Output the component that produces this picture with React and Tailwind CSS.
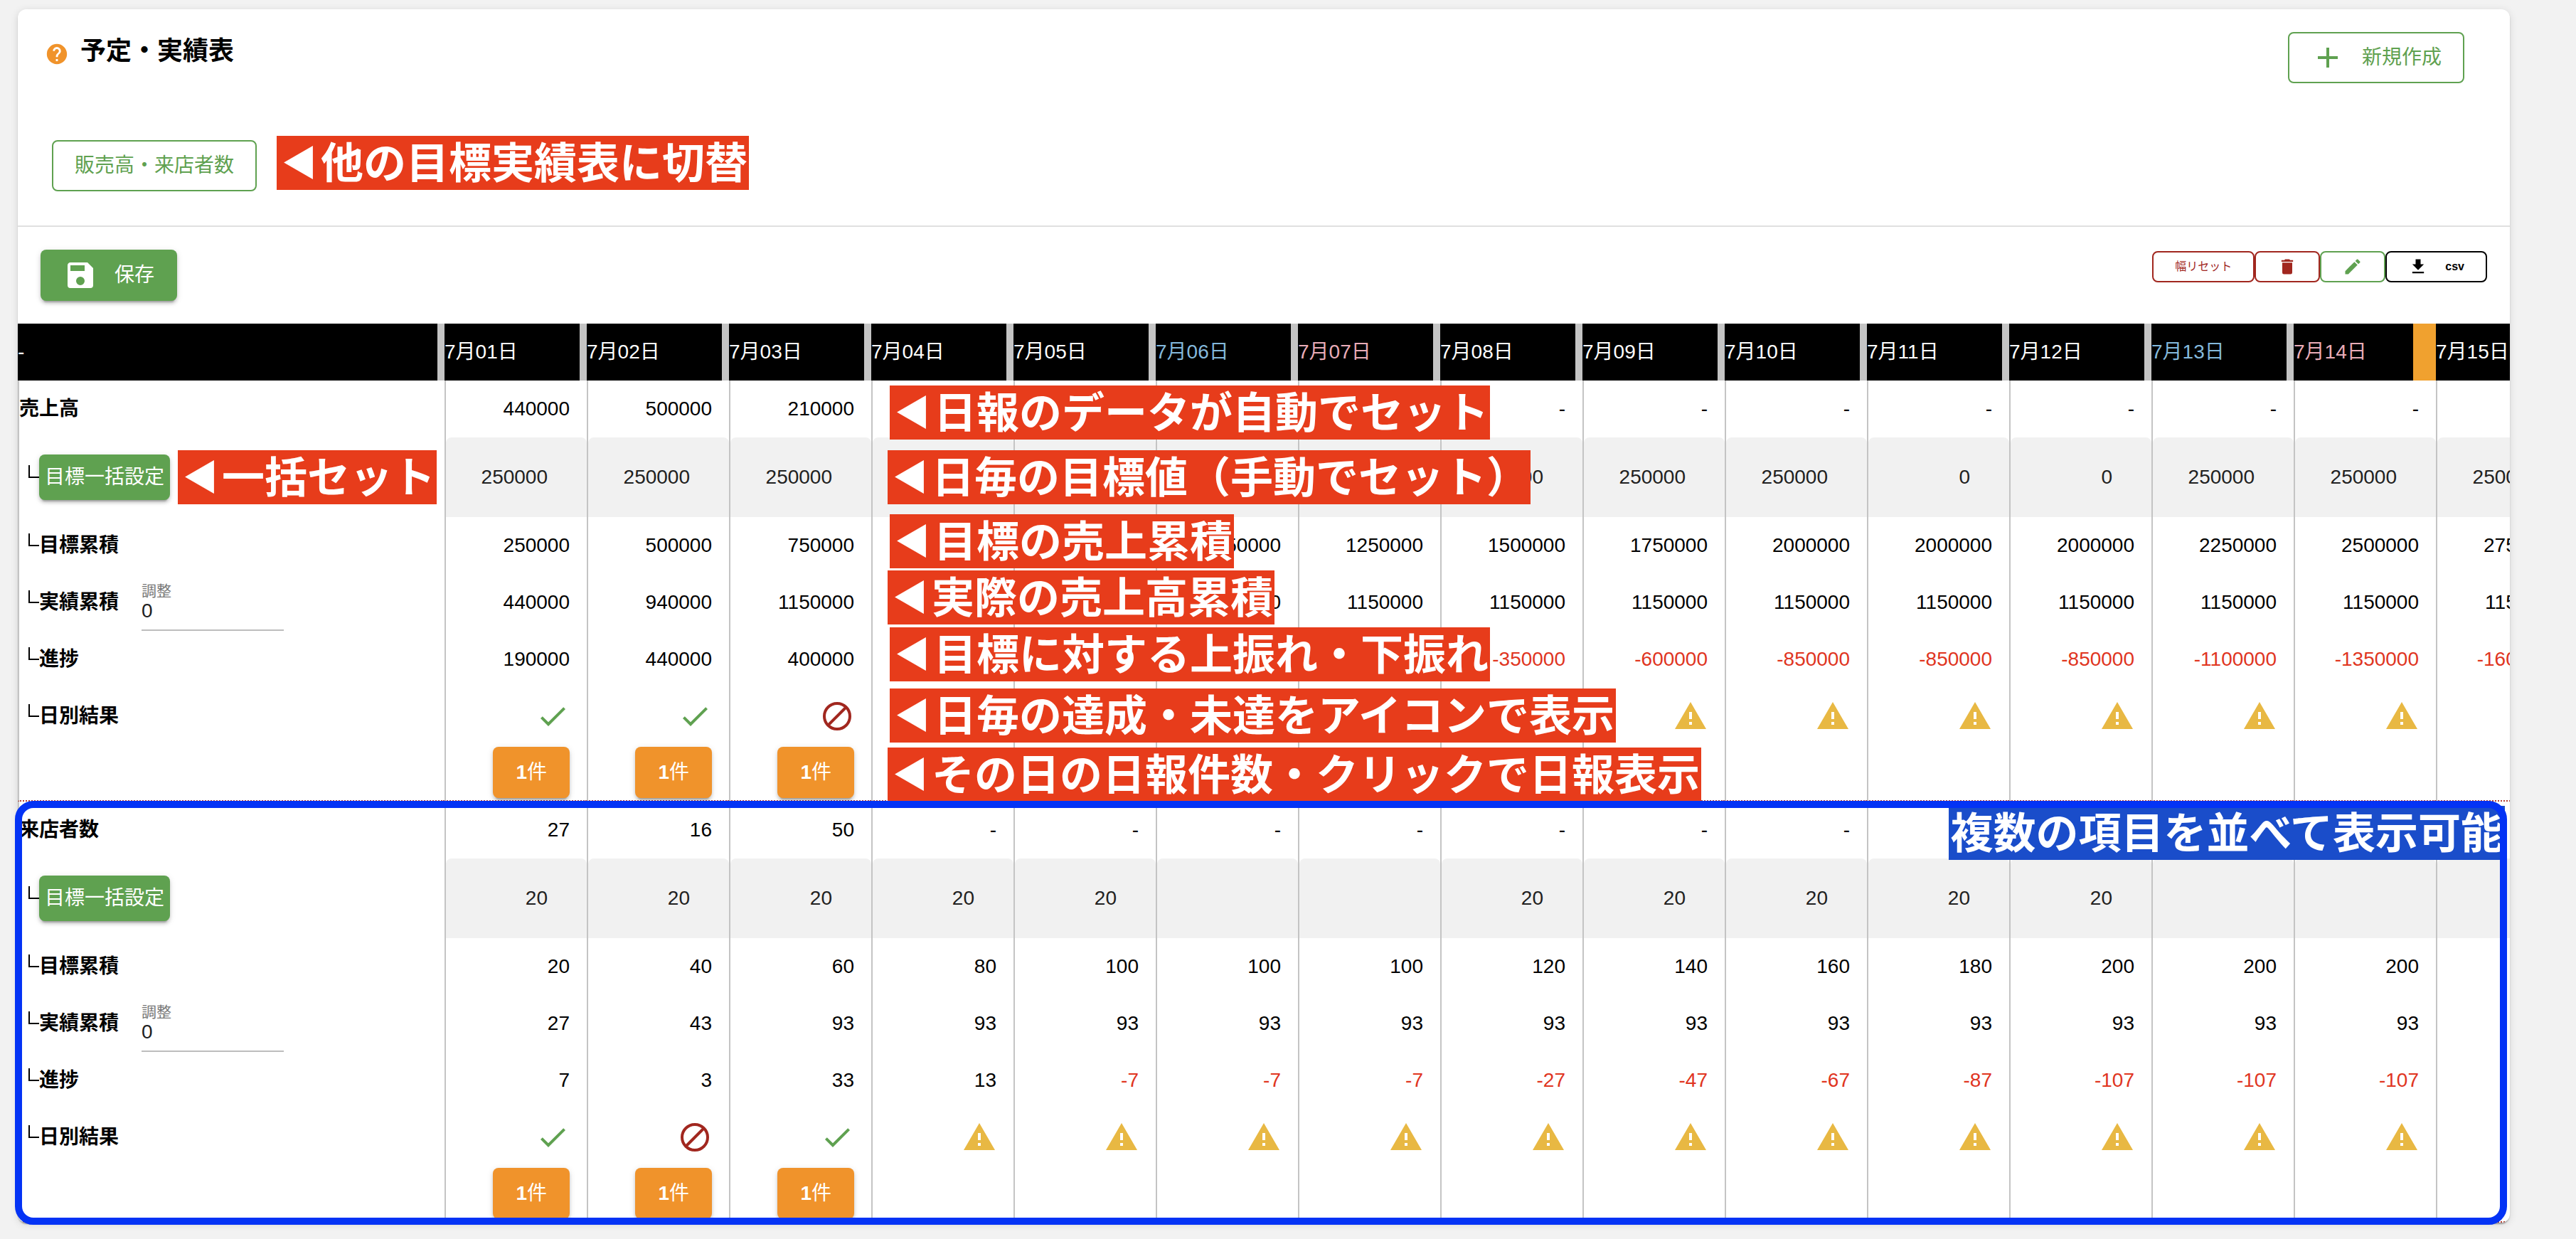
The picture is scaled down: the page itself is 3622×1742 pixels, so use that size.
import React from "react";

const ICONS = {
  help: "M15.07,11.25L14.17,12.17C13.45,12.89 13,13.5 13,15H11V14.5C11,13.39 11.45,12.39 12.17,11.67L13.41,10.41C13.78,10.05 14,9.55 14,9C14,7.89 13.1,7 12,7A2,2 0 0,0 10,9H8A4,4 0 0,1 12,5A4,4 0 0,1 16,9C16,9.88 15.64,10.67 15.07,11.25M13,19H11V17H13M12,2A10,10 0 0,0 2,12A10,10 0 0,0 12,22A10,10 0 0,0 22,12C22,6.47 17.5,2 12,2Z",
  plus: "M19,13H13V19H11V13H5V11H11V5H13V11H19V13Z",
  save: "M15,9H5V5H15M12,19A3,3 0 0,1 9,16A3,3 0 0,1 12,13A3,3 0 0,1 15,16A3,3 0 0,1 12,19M17,3H5C3.89,3 3,3.9 3,5V19A2,2 0 0,0 5,21H19A2,2 0 0,0 21,19V7L17,3Z",
  trash: "M19,4H15.5L14.5,3H9.5L8.5,4H5V6H19M6,19A2,2 0 0,0 8,21H16A2,2 0 0,0 18,19V7H6V19Z",
  pencil: "M20.71,7.04C21.1,6.65 21.1,6 20.71,5.63L18.37,3.29C18,2.9 17.35,2.9 16.96,3.29L15.12,5.12L18.87,8.87M3,17.25V21H6.75L17.81,9.93L14.06,6.18L3,17.25Z",
  download: "M5,20H19V18H5M19,9H15V3H9V9H5L12,16L19,9Z",
  check: "M21,7L9,19L3.5,13.5L4.91,12.09L9,16.17L19.59,5.59L21,7Z",
  alert: "M13,14H11V9H13M13,18H11V16H13M1,21H23L12,2L1,21Z",
};

function Icon({ name, className }) {
  return (
    <svg viewBox="0 0 24 24" fill="currentColor" aria-hidden="true" className={`shrink-0 ${className}`}>
      <path d={ICONS[name]} />
    </svg>
  );
}

const RAISED =
  "rounded-lg text-white shadow-[0_6px_2px_-4px_rgba(0,0,0,0.2),0_4px_4px_rgba(0,0,0,0.14),0_2px_10px_rgba(0,0,0,0.12)]";

function ResultIcon({ kind }) {
  if (kind === "ok") return <Icon name="check" className="size-12 text-[#5fa150]" />;
  if (kind === "ng")
    return (
      <svg viewBox="0 0 24 24" fill="none" stroke="currentColor" strokeWidth="2" aria-hidden="true" className="size-12 shrink-0 text-[#a1271f]">
        <circle cx="12" cy="12" r="9" />
        <path d="M5.64 18.36L18.36 5.64" />
      </svg>
    );
  return <Icon name="alert" className="size-12 text-[#e8b843]" />;
}

const DAYS = Array.from({ length: 15 }, (_, i) => ({
  label: `7月${String(i + 1).padStart(2, "0")}日`,
  color: i % 7 === 5 ? "text-[#84b9dc]" : i % 7 === 6 ? "text-[#e9acb8]" : "text-white",
  edge: i === 13 ? "border-r-[32px] border-[#f0a12f]" : "border-r-[10px] border-[#c4c4c4]",
}));

const dashes = (n) => Array(n).fill("-");

const SECTIONS = [
  {
    id: "sales",
    title: "売上高",
    actual: ["440000", "500000", "210000", ...dashes(12)],
    target: ["250000", "250000", "250000", "250000", "250000", "0", "0", "250000", "250000", "250000", "0", "0", "250000", "250000", "250000"],
    targetSum: [250000, 500000, 750000, 1000000, 1250000, 1250000, 1250000, 1500000, 1750000, 2000000, 2000000, 2000000, 2250000, 2500000, 2750000],
    actualSum: [440000, 940000, ...Array(13).fill(1150000)],
    results: ["ok", "ok", "ng", ...Array(12).fill("alert")],
  },
  {
    id: "visitors",
    title: "来店者数",
    actual: ["27", "16", "50", ...dashes(12)],
    target: ["20", "20", "20", "20", "20", "", "", "20", "20", "20", "20", "20", "", "", "20"],
    targetSum: [20, 40, 60, 80, 100, 100, 100, 120, 140, 160, 180, 200, 200, 200, 220],
    actualSum: [27, 43, ...Array(13).fill(93)],
    results: ["ok", "ng", "ok", ...Array(12).fill("alert")],
  },
];

const CELL = "h-20 border-l-2 border-[#c4c4c4] p-0";

function Branch() {
  return <span className="mb-4 ml-[13px] h-[18px] w-[15px] shrink-0 border-b-2 border-l-2 border-black" aria-hidden="true" />;
}

function RowLabel({ branch, children }) {
  return (
    <th scope="row" className={`${CELL} text-left font-bold`}>
      <div className="flex h-full items-center">
        {branch && <Branch />}
        {children}
      </div>
    </th>
  );
}

function ValueRow({ label, branch, values, extra }) {
  return (
    <tr>
      <RowLabel branch={branch}>
        {label}
        {extra}
      </RowLabel>
      {values.map((v, i) => (
        <td key={i} className={`${CELL} pr-6 text-right ${Number(v) < 0 ? "text-[#e0351f]" : ""}`}>
          {v}
        </td>
      ))}
    </tr>
  );
}

function Section({ s }) {
  const last = "border-b-2 [border-bottom-style:dotted] border-b-[#b23a30]";
  return (
    <tbody>
      <ValueRow label={s.title} values={s.actual} />
      <tr>
        <RowLabel branch>
          <button type="button" className={`${RAISED} h-16 bg-[#5fa150] px-2 font-normal`}>
            目標一括設定
          </button>
        </RowLabel>
        {s.target.map((v, i) => (
          <td key={i} className={CELL}>
            <input
              type="text"
              inputMode="numeric"
              aria-label={`${s.title} 目標 ${DAYS[i].label}`}
              defaultValue={v}
              className="block h-28 w-full rounded-t-lg bg-[#f1f1f1] pr-[55px] text-right text-[#212121] outline-none"
            />
          </td>
        ))}
      </tr>
      <ValueRow branch label="目標累積" values={s.targetSum} />
      <ValueRow
        branch
        label="実績累積"
        values={s.actualSum}
        extra={
          <div className="ml-8 flex h-20 w-[200px] flex-col justify-end font-normal">
            <label htmlFor={`${s.id}-adjust`} className="text-[21px] leading-6 text-[#777777]">
              調整
            </label>
            <input
              id={`${s.id}-adjust`}
              type="text"
              inputMode="numeric"
              defaultValue="0"
              className="h-11 w-full border-b-2 border-[#bdbdbd] pb-2.5 text-[#212121] outline-none"
            />
          </div>
        }
      />
      <ValueRow branch label="進捗" values={s.actualSum.map((v, i) => v - s.targetSum[i])} />
      <tr>
        <RowLabel branch>日別結果</RowLabel>
        {s.results.map((r, i) => (
          <td key={i} className={`${CELL} pr-6`}>
            <div className="flex justify-end">
              <ResultIcon kind={r} />
            </div>
          </td>
        ))}
      </tr>
      <tr>
        <td className={`${CELL} ${last}`} />
        {s.results.map((_, i) => (
          <td key={i} className={`${CELL} ${last} pr-6`}>
            {i < 3 && (
              <button type="button" className={`${RAISED} ml-auto flex h-[72px] items-center bg-[#f0932b] px-8`}>
                <span className="font-bold">1</span>件
              </button>
            )}
          </td>
        ))}
      </tr>
    </tbody>
  );
}

function Callout({ className, arrow, children }) {
  return (
    <div className={`absolute flex h-[76px] px-[2px] font-['Noto_Sans_CJK_JP',sans-serif] text-[60px] leading-[68px] font-bold whitespace-nowrap text-white ${className}`}>
      {arrow && <span className="w-[60px] text-center text-[50px]">◀</span>}
      {children}
    </div>
  );
}

const NOTES = [
  { arrow: true, text: "一括セット", at: "left-[225px] top-[178px] bg-[#e73c1b]" },
  { arrow: true, text: "日報のデータが自動でセット", at: "left-[1226px] top-[87px] bg-[#e73c1b]" },
  { arrow: true, text: "日毎の目標値（手動でセット）", at: "left-[1223px] top-[178px] bg-[#e73c1b]" },
  { arrow: true, text: "目標の売上累積", at: "left-[1226px] top-[268px] bg-[#e73c1b]" },
  { arrow: true, text: "実際の売上高累積", at: "left-[1223px] top-[347px] bg-[#e73c1b]" },
  { arrow: true, text: "目標に対する上振れ・下振れ", at: "left-[1226px] top-[427px] bg-[#e73c1b]" },
  { arrow: true, text: "日毎の達成・未達をアイコンで表示", at: "left-[1226px] top-[513px] bg-[#e73c1b]" },
  { arrow: true, text: "その日の日報件数・クリックで日報表示", at: "left-[1223px] top-[596px] bg-[#e73c1b]" },
  { arrow: false, text: "複数の項目を並べて表示可能", at: "right-[7px] top-[678px] bg-[#1a4dca]" },
];

const OUTLINED = "flex h-[72px] items-center gap-6 rounded-lg border-2 border-[#5fa150] px-[30px] text-[#5fa150]";
const SMALL = "flex h-11 items-center gap-6 rounded-lg border-2 px-[30px] text-base";

export default function App() {
  return (
    <div className="min-h-screen overflow-hidden bg-[#f2f2f2] pt-[13px] pr-[93px] pb-5 pl-[25px] font-['Liberation_Sans','Noto_Sans_CJK_JP',sans-serif] text-[28px] leading-10 text-black">
      <main className="rounded-xl bg-white shadow-[0_4px_2px_-2px_rgba(0,0,0,0.2),0_2px_2px_rgba(0,0,0,0.14),0_2px_12px_rgba(0,0,0,0.12)]">
        <header className="border-b-2 border-[#e0e0e0] pt-8 pr-16 pb-12">
          <div className="flex items-start justify-between pl-[38px]">
            <h1 className="flex items-center gap-4 text-[36px] leading-[54px] font-bold">
              <Icon name="help" className="mt-2 size-[34px] text-[#f0932b]" />
              予定・実績表
            </h1>
            <button type="button" className={OUTLINED}>
              <Icon name="plus" className="size-12" />
              新規作成
            </button>
          </div>
          <div className="mt-20 flex pl-12">
            <div className="relative">
              <button type="button" className={OUTLINED}>
                販売高・来店者数
              </button>
              <Callout arrow className="-top-[6px] left-full ml-7 bg-[#e73c1b]">
                他の目標実績表に切替
              </Callout>
            </div>
          </div>
        </header>

        <div className="flex items-start justify-between p-8">
          <button type="button" className={`${RAISED} flex h-[72px] items-center gap-6 bg-[#5fa150] px-8`}>
            <Icon name="save" className="size-12" />
            保存
          </button>
          <div className="flex pt-0.5">
            <button type="button" className={`${SMALL} border-[#a1271f] text-[#a1271f]`}>
              幅リセット
            </button>
            <button type="button" aria-label="削除" className={`${SMALL} border-[#a1271f] text-[#a1271f]`}>
              <Icon name="trash" className="size-7" />
            </button>
            <button type="button" aria-label="編集" className={`${SMALL} border-[#5fa150] text-[#5fa150]`}>
              <Icon name="pencil" className="size-7" />
            </button>
            <button type="button" className={`${SMALL} border-black font-bold`}>
              <Icon name="download" className="size-7" />
              csv
            </button>
          </div>
        </div>

        <div className="relative">
          <div className="overflow-hidden rounded-b-xl">
            <table className="w-[3600px] table-fixed border-separate border-spacing-0">
              <colgroup>
                <col className="w-[600px]" />
                {DAYS.map((d) => (
                  <col key={d.label} className="w-[200px]" />
                ))}
              </colgroup>
              <thead>
                <tr className="bg-black text-left text-white">
                  <th scope="col" className="h-20 border-r-[10px] border-[#c4c4c4] p-0 font-normal">
                    -
                  </th>
                  {DAYS.map((d) => (
                    <th key={d.label} scope="col" className={`h-20 p-0 font-normal ${d.edge} ${d.color}`}>
                      {d.label}
                    </th>
                  ))}
                </tr>
              </thead>
              {SECTIONS.map((s) => (
                <Section key={s.id} s={s} />
              ))}
            </table>
          </div>
          {NOTES.map((n) => (
            <Callout key={n.text} arrow={n.arrow} className={n.at}>
              {n.text}
            </Callout>
          ))}
          <div className="pointer-events-none absolute top-[671px] right-1 -bottom-[3px] -left-1 rounded-[26px] border-[10px] border-[#0433f5]" />
        </div>
      </main>
    </div>
  );
}
